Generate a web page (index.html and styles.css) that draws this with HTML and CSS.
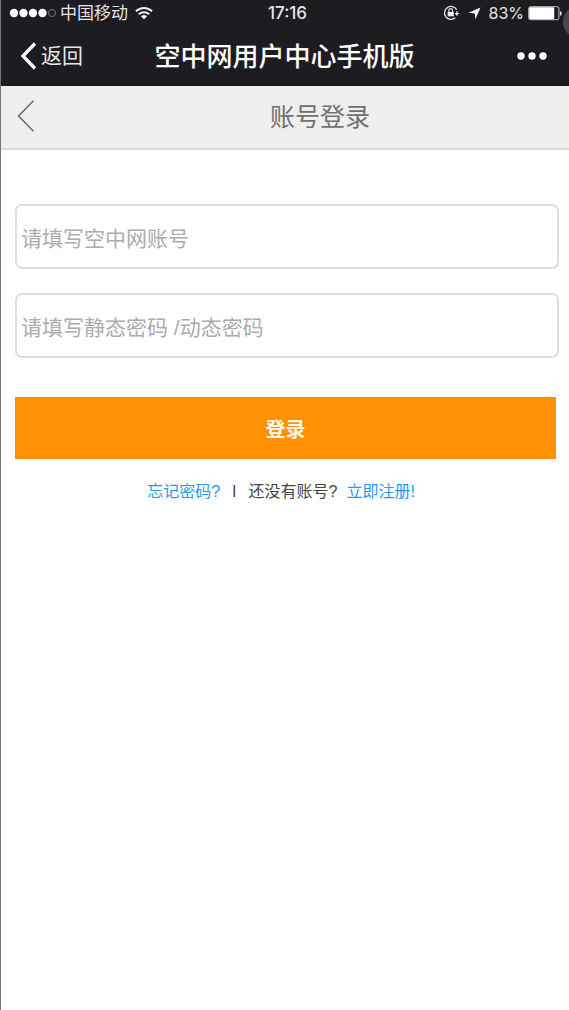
FILE: index.html
```
<!DOCTYPE html>
<html lang="zh-CN">
<head>
<meta charset="utf-8">
<meta name="viewport" content="width=device-width, initial-scale=1">
<title>空中网用户中心手机版</title>
<link rel="stylesheet" href="styles.css">
</head>
<body>
<div class="top">
  <div class="status">
    <div class="status-left">
      <svg class="signal" width="48" height="10" viewBox="0 0 48 10" fill="#fff"><circle cx="5" cy="5" r="4.2"/><circle cx="14.5" cy="5" r="4.2"/><circle cx="24" cy="5" r="4.2"/><circle cx="33.500" cy="5" r="4.200"/><circle cx="43" cy="5" r="3.500" fill="none" stroke="#77777b"/></svg>
      <span class="carrier">中国移动</span>
      <svg class="wifi" width="18" height="14" viewBox="0 0 18 14" fill="none" stroke="#f4f4f4" stroke-width="2"><path d="M1 5.200a11.500 11.500 0 0 1 16 0M3.900 8.300a7.300 7.300 0 0 1 10.200 0"/><path d="M9 13.300 6 10.400a4.300 4.300 0 0 1 6 0z" fill="#f4f4f4" stroke="none"/></svg>
    </div>
    <time class="clock">17:16</time>
    <div class="status-right">
      <svg width="17" height="16" viewBox="0 0 17 16" fill="none" stroke="#e6e6e6"><path d="M13.700 4.700A6.500 6.500 0 1 0 12.300 12.800" stroke-width="1.300"/><path d="M13.900 6.200v2.500" stroke-width="1.300"/><path d="M11.600 8h4.600l-2.300 3z" fill="#e6e6e6" stroke="none"/><rect x="4.700" y="7" width="6" height="4.300" fill="#fff" stroke="none"/><path d="M5.900 7V5.500a1.800 1.800 0 0 1 3.600 0V7" stroke-width="1.200"/></svg>
      <svg class="location" width="13" height="13" viewBox="0 0 13 13"><path d="M12.500.5 7.500 12.300 6.700 6.400.5 5.700z" fill="#f4f4f4"/></svg>
      <span>83%</span>
      <svg class="battery" width="34" height="15" viewBox="0 0 34 15"><rect x=".7" y=".7" width="30.200" height="13" rx="2" fill="none" stroke="#c8c8ca" stroke-width="1"/><rect x="1.200" y="1.200" width="25" height="12" rx="1" fill="#fff"/><path d="M32 5c2.300.8 2.300 4 0 4.800z" fill="#e6e6e6"/></svg>
    </div>
    <span class="assist"></span>
  </div>
  <div class="titlebar">
    <button class="back" type="button"><svg width="17" height="28" viewBox="0 0 17 28" fill="none" stroke="#fff" stroke-width="3.300"><path d="M15 1.500 3 14l12 12.500"/></svg>返回</button>
    <h1 class="title">空中网用户中心手机版</h1>
    <button class="more" type="button" aria-label="更多"><svg width="30" height="8" viewBox="0 0 30 8" fill="#fff"><circle cx="4" cy="4" r="3.700"/><circle cx="15" cy="4" r="3.700"/><circle cx="26" cy="4" r="3.700"/></svg></button>
  </div>
</div>
<header class="pagebar">
  <button class="page-back" type="button" aria-label="返回上一页"><svg width="18" height="32" viewBox="0 0 18 32" fill="none" stroke="#666" stroke-width="1.500"><path d="M16.500.8 1.500 16l15 15.200"/></svg></button>
  <h2 class="page-title">账号登录</h2>
</header>
<main>
  <form class="login">
    <input class="field" type="text" placeholder="请填写空中网账号" aria-label="账号">
    <input class="field" type="password" placeholder="请填写静态密码 /动态密码" aria-label="密码">
    <button class="submit" type="button">登录</button>
  </form>
  <p class="links"><a href="#">忘记密码?</a><span class="divider">I</span><span>还没有账号?</span><a class="register" href="#">立即注册!</a></p>
</main>
</body>
</html>
```
FILE: styles.css
```
* {
  box-sizing: border-box;
}

body {
  margin: 0;
  min-height: 100vh;
  border-left: 1px solid #737378;
  background: #fff;
  font-family: "Liberation Sans", "Noto Sans CJK SC", sans-serif;
  color: #444;
}

svg {
  display: block;
  flex: none;
}

button {
  padding: 0;
  border: 0;
  background: none;
  font: inherit;
  color: inherit;
}

.top {
  overflow: hidden;
  background: #1d1c21;
  color: #e6e6e6;
}

.status {
  position: relative;
  display: grid;
  grid-template-columns: 1fr auto 1fr;
  align-items: center;
  height: 26px;
  padding: 0 7px 0 8px;
  font-size: 17px;
  line-height: 24px;
}

.status-left,
.status-right {
  display: flex;
  align-items: center;
}

.signal {
  margin-right: 3px;
}

.carrier {
  padding-top: 2px;
}

.wifi {
  margin-left: 7px;
}

.clock {
  padding-left: 4px;
  font-family: Inter, sans-serif;
  font-size: 17px;
  font-weight: 500;
}

.status-right {
  justify-content: flex-end;
  font-family: Inter, sans-serif;
  font-size: 16px;
}

.location {
  margin: 0 8px;
}

.battery {
  margin-left: 4px;
}

.assist {
  position: absolute;
  top: 6px;
  right: -26px;
  width: 32px;
  height: 32px;
  border-radius: 50%;
  background: #48484b;
}

.titlebar {
  display: grid;
  grid-template-columns: 1fr auto 1fr;
  align-items: center;
  height: 60px;
  padding: 0 22px 0 19px;
}

.back {
  display: flex;
  align-items: center;
  gap: 4px;
  font-size: 21px;
  line-height: 28px;
}

.title {
  margin: 0;
  padding: 0 0 4px 2px;
  font-size: 26px;
  font-weight: 500;
  color: #fff;
}

.more {
  justify-self: end;
}

.pagebar {
  display: grid;
  grid-template-columns: 70px 1fr;
  align-items: center;
  height: 64px;
  padding-left: 16px;
  padding-bottom: 2px;
  border-bottom: 2px solid #d9d9d9;
  background: #efefef;
}

.page-back {
  justify-self: start;
}

.page-title {
  margin: 0;
  padding: 0 16px 2px 0;
  font-size: 25px;
  font-weight: 400;
  text-align: center;
  color: #707070;
}

.login {
  display: flex;
  flex-direction: column;
  padding: 54px 10px 0 14px;
}

.field {
  height: 65px;
  margin: 0 0 24px;
  padding: 4px 4px 0;
  border: 2px solid #dfdfdf;
  border-radius: 7px;
  background: #fff;
  font: inherit;
  font-size: 21px;
  color: #444;
}

.field::placeholder {
  color: #acacac;
  opacity: 1;
}

.submit {
  height: 62px;
  margin: 15px 3px 0 0;
  background: #ff9103;
  font-size: 20px;
  font-weight: 700;
  color: #fff6e8;
}

.links {
  display: flex;
  justify-content: center;
  margin: 21px 8px 0 0;
  font-size: 16px;
  line-height: 24px;
}

.links a {
  color: #1b9cf0;
  text-decoration: none;
}

.divider {
  margin: 0 12px;
}

.register {
  margin-left: 9px;
}
```
